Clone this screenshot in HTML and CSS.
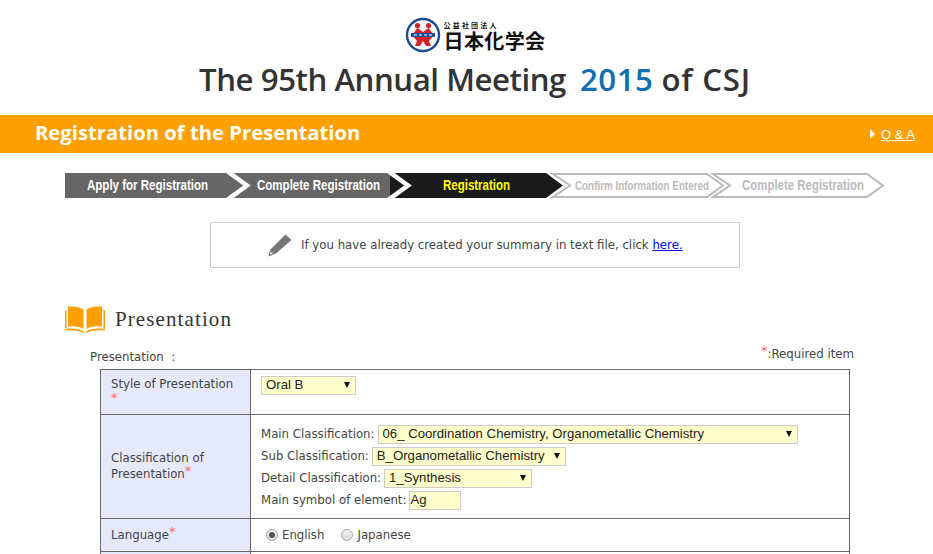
FILE: index.html
```html
<!DOCTYPE html>
<html>
<head>
    <title>Registration of the Presentation</title>
    <link rel="stylesheet" href="styles.css">
</head>
<body>
    <div class="header">
        <div class="logo">
            <svg class="logo-mark" width="36" height="36" viewBox="0 0 36 36">
                <circle cx="18" cy="18" r="16" fill="#fff" stroke="#1b4a96" stroke-width="2.4"/>
                <circle cx="12.5" cy="8.5" r="2.6" fill="#d3232a"/>
                <circle cx="23.5" cy="8.5" r="2.6" fill="#d3232a"/>
                <path d="M12.5 11 L18 15 L23.5 11 L29 18 L24 24 L26 29 H21 L18 24 L15 29 H10 L12 24 L7 18 Z" fill="#d3232a"/>
                <rect x="6" y="16" width="24" height="4" fill="#1b4a96"/>
                <path d="M9 18 H27" stroke="#fff" stroke-width="1" stroke-dasharray="3 2"/>
            </svg>
            <div class="logo-text">
                <div class="logo-small">公益社団法人</div>
                <div class="logo-big">日本化学会</div>
            </div>
        </div>
        <h1><span class="meeting">The 95th Annual Meeting</span> <span class="year">2015</span> <span class="csj">of CSJ</span></h1>
    </div>

    <div class="title-bar">
        <div class="title-text">Registration of the Presentation</div>
        <div class="qa"><span class="qa-arrow"></span><a href="#">Q &amp; A</a></div>
    </div>

    <svg class="steps" width="820" height="25" viewBox="0 0 820 25">
        <rect x="0" y="0" width="330" height="25" fill="#666"/>
        <polygon points="325,0 481,0 498,12.5 481,25 325,25" fill="#1a1a1a"/>
        <polyline points="162,-2 182,12.5 162,27" fill="none" stroke="#fff" stroke-width="4.5"/>
        <polyline points="323,-2 343,12.5 323,27" fill="none" stroke="#fff" stroke-width="4.5"/>
        <polygon points="488,1 642,1 658,12.5 642,24 488,24 505,12.5" fill="#fff" stroke="#bbb" stroke-width="2"/>
        <polygon points="648,1 802,1 818,12.5 802,24 648,24 665,12.5" fill="#fff" stroke="#bbb" stroke-width="2"/>
        <text x="22" y="17" textLength="121" lengthAdjust="spacingAndGlyphs" class="step-text">Apply for Registration</text>
        <text x="192" y="17" textLength="123" lengthAdjust="spacingAndGlyphs" class="step-text">Complete Registration</text>
        <text x="378" y="17" textLength="67" lengthAdjust="spacingAndGlyphs" class="step-text step-now">Registration</text>
        <text x="510" y="17" textLength="134" lengthAdjust="spacingAndGlyphs" class="step-text step-next step-small">Confirm Information Entered</text>
        <text x="677" y="17" textLength="122" lengthAdjust="spacingAndGlyphs" class="step-text step-next">Complete Registration</text>
    </svg>

    <div class="notice">
        <svg width="24" height="23" viewBox="0 0 24 23">
            <path d="M17.5 0.5 L23.5 6 L8 19.5 L2 16 Z" fill="#777"/>
            <path d="M2 16 L8 19.5 L0.5 22.5 Z" fill="#777"/>
            <path d="M2.6 18 L5 19.4 L2 20.6 Z" fill="#fff"/>
        </svg>
        <span>If you have already created your summary in text file, click <a href="#">here.</a></span>
    </div>

    <div class="section">
        <svg width="40" height="27" viewBox="0 0 40 27">
            <path d="M0 4 L0 22 L1.5 22 L1.5 5 Z" fill="#ffa000"/>
            <path d="M3 0.5 C9 0.5 15 1 18.5 3.5 V23 C15 20.5 9 20 3 20.5 Z" fill="#ffa000"/>
            <path d="M37 0.5 C31 0.5 25 1 21.5 3.5 V23 C25 20.5 31 20 37 20.5 Z" fill="#ffa000"/>
            <path d="M38.5 4 H40 V22.5 H38.5 Z" fill="#ffa000"/>
            <path d="M0 23 C7 22 14 22.5 18.5 25.5 L20 26.5 L21.5 25.5 C26 22.5 33 22 40 23 V24.5 C33 24 27 24.5 22 26.5 H18 C13 24.5 7 24 0 24.5 Z" fill="#ffa000"/>
        </svg>
        <h2>Presentation</h2>
    </div>

    <div class="form-head">
        <div>Presentation &nbsp;:</div>
        <div class="required-note"><span class="req">*</span>:Required item</div>
    </div>

    <table class="form-table">
        <tr class="row-style">
            <th>Style of Presentation<br><span class="req req-low">*</span></th>
            <td><span class="fake-select sel-style">Oral B</span></td>
        </tr>
        <tr class="row-class">
            <th class="mid">Classification of Presentation<span class="req">*</span></th>
            <td>
                <div class="field">Main Classification: <span class="fake-select sel-main">06_ Coordination Chemistry, Organometallic Chemistry</span></div>
                <div class="field">Sub Classification: <span class="fake-select sel-sub">B_Organometallic Chemistry</span></div>
                <div class="field">Detail Classification: <span class="fake-select sel-detail">1_Synthesis</span></div>
                <div class="field">Main symbol of element: <span class="fake-input">Ag</span></div>
            </td>
        </tr>
        <tr class="row-lang">
            <th class="mid">Language<span class="req">*</span></th>
            <td>
                <div class="radios">
                    <span class="radio on"></span><span class="radio-label">English</span>
                    <span class="radio"></span><span class="radio-label">Japanese</span>
                </div>
            </td>
        </tr>
        <tr class="row-title">
            <th>Title<span class="req">*</span></th>
            <td></td>
        </tr>
    </table>
</body>
</html>
```

FILE: styles.css
```css
html, body {
    height: 554px;
    overflow: hidden;
}

body {
    margin: 0;
    background: #fff;
    color: #444;
    font-family: "DejaVu Sans", sans-serif;
    font-size: 11.76px;
}

a {
    color: #00e;
}

.header {
    height: 115px;
    box-sizing: border-box;
    padding-left: 17px;
    display: flex;
    flex-direction: column;
    align-items: center;
}

.logo {
    display: flex;
    align-items: center;
    gap: 3px;
    margin-top: 17px;
    height: 36px;
}

.logo-text {
    color: #111;
    font-family: "Noto Sans CJK JP", sans-serif;
    font-weight: 700;
}

.logo-small {
    font-size: 7px;
    line-height: 10px;
    letter-spacing: 2.2px;
}

.logo-big {
    font-size: 20px;
    line-height: 21px;
    letter-spacing: 0.4px;
}

h1 {
    margin: 8px 0 0;
    font-family: "Open Sans", sans-serif;
    font-size: 31.2px;
    font-weight: 600;
    line-height: 36px;
    color: #333;
}

.meeting {
    letter-spacing: -0.45px;
}

.year {
    color: #0f6db0;
    margin-left: 6px;
    letter-spacing: 0.5px;
}

.csj {
    letter-spacing: 0.8px;
}

.title-bar {
    height: 38px;
    box-sizing: border-box;
    background: #ffa000;
    color: #fff;
    display: flex;
    justify-content: space-between;
    align-items: center;
    padding: 0 18px 5px 35px;
}

.title-text {
    font-family: "Open Sans", sans-serif;
    font-size: 20.25px;
    font-weight: 700;
}

.qa {
    display: flex;
    align-items: center;
    gap: 6px;
    margin-top: 5px;
    font-family: "Liberation Sans", sans-serif;
    font-size: 13px;
}

.qa a {
    color: #fff;
}

.qa-arrow {
    width: 0;
    height: 0;
    border-left: 5px solid #fff;
    border-top: 5px solid transparent;
    border-bottom: 5px solid transparent;
}

.steps {
    display: block;
    margin: 20px 0 0 65px;
}

.step-text {
    font-family: "Liberation Sans", sans-serif;
    font-size: 14px;
    font-weight: 700;
    fill: #fff;
}

.step-now {
    fill: #ff0;
}

.step-next {
    fill: #bbb;
}

.step-small {
    font-size: 13px;
}

.notice {
    width: 471px;
    height: 44px;
    margin: 24px 0 0 210px;
    border: 1px solid #ccc;
    display: flex;
    align-items: center;
    gap: 9px;
    padding-left: 57px;
}

.section {
    display: flex;
    align-items: center;
    gap: 10px;
    margin: 38px 0 0 65px;
}

h2 {
    margin: 0;
    font-family: "Liberation Serif", serif;
    font-size: 21px;
    font-weight: 400;
    letter-spacing: 1.1px;
    color: #333;
}

.form-head {
    display: flex;
    justify-content: space-between;
    margin: 16px 79px 0 90px;
    line-height: 16px;
}

.required-note {
    margin-top: -3px;
}

.req {
    color: #f66;
    font-size: 13px;
    vertical-align: 3px;
    line-height: 0;
}

.req-low {
    vertical-align: 2px;
}

.form-table {
    border-collapse: collapse;
    margin: 4px 0 0 100px;
    width: 750px;
    table-layout: fixed;
}

.form-table th, .form-table td {
    border: 1px solid #666;
    padding: 0;
    font-weight: 400;
    text-align: left;
    vertical-align: top;
}

.form-table th {
    width: 150px;
    box-sizing: border-box;
    background: #e6e9fc;
    padding: 6px 10px 0;
    line-height: 16px;
}

.form-table th.mid {
    vertical-align: middle;
    padding: 0 10px 2px;
}

.form-table .row-lang th.mid {
    padding-bottom: 0;
}

.form-table td {
    padding: 6px 10px 0;
}

.row-style {
    height: 45px;
}

.row-class {
    height: 104px;
}

.row-lang {
    height: 33px;
}

.row-title {
    height: 40px;
}

.field {
    height: 22px;
    display: flex;
    align-items: center;
    gap: 3px;
}

.row-class td {
    padding-top: 8px;
}

.fake-select, .fake-input {
    display: inline-block;
    box-sizing: border-box;
    height: 19px;
    line-height: 16px;
    border: 1px solid #ccc;
    background: #ffc;
    color: #222;
    padding-left: 4px;
    font-family: "Liberation Sans", sans-serif;
    font-size: 13.2px;
    position: relative;
}

.fake-select::after {
    content: "";
    position: absolute;
    right: 5px;
    top: 5px;
    border-top: 6px solid #111;
    border-left: 3.5px solid transparent;
    border-right: 3.5px solid transparent;
}

.sel-style {
    width: 95px;
}

.sel-main {
    width: 420px;
}

.sel-sub {
    width: 194px;
}

.sel-detail {
    width: 148px;
}

.fake-input {
    width: 52px;
    padding-left: 0;
}

.radios {
    display: flex;
    align-items: center;
    height: 20px;
    padding-left: 5px;
}

.radio {
    box-sizing: border-box;
    width: 12px;
    height: 12px;
    border-radius: 50%;
    border: 1px solid #aaa;
    background: linear-gradient(#eee, #ddd);
    margin-right: 4px;
    position: relative;
}

.radio.on::after {
    content: "";
    position: absolute;
    left: 2px;
    top: 2px;
    width: 6px;
    height: 6px;
    border-radius: 50%;
    background: #555;
}

.radio-label {
    margin-right: 17px;
}
```
